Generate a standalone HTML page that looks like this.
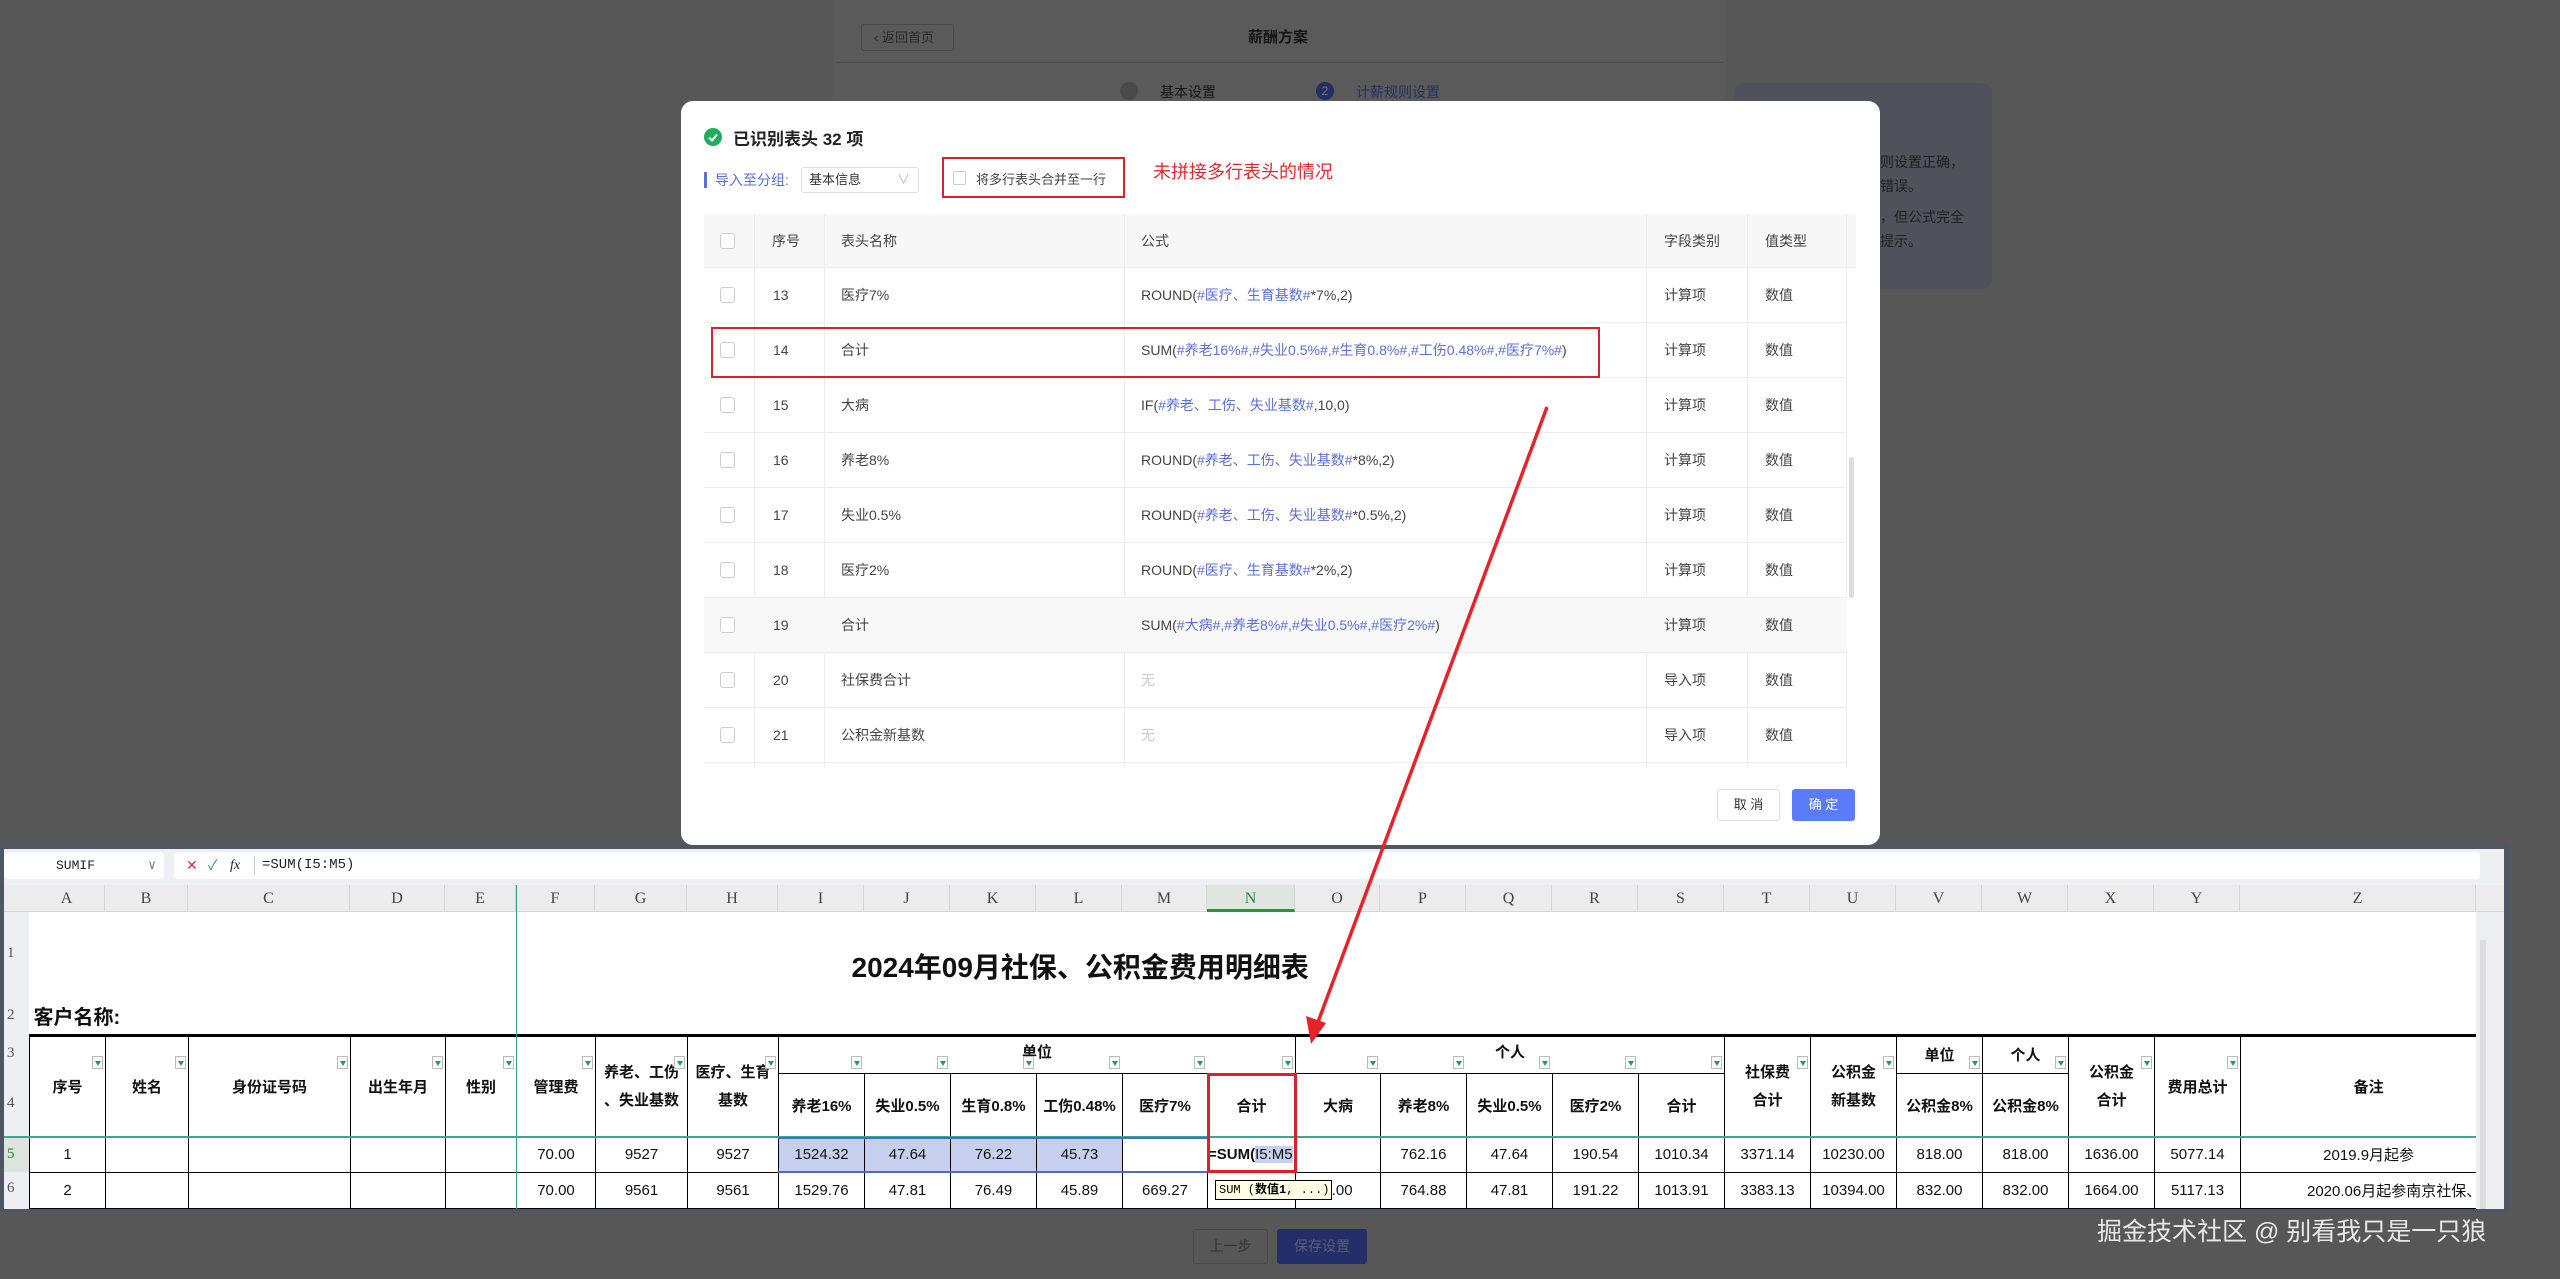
<!DOCTYPE html>
<html style="background:#575757"><head><meta charset="utf-8">
<style>
*{box-sizing:border-box;margin:0;padding:0}
html,body{background:#575757}
body{width:2560px;height:1279px;position:relative;overflow:hidden;font-family:"Liberation Sans","Noto Sans CJK SC",sans-serif;color:#333}
.a{position:absolute}
.mrow{position:absolute;left:704px;width:1143px;height:55px;border-bottom:1px solid #ececec;font-size:14px;color:#444}
.mrow div{position:absolute;top:0;height:100%;line-height:54px;white-space:nowrap}
.mrow .cb{left:16px;top:19px;width:15px;height:16px;border:1px solid #ccc;border-radius:3px;background:#fff}
.vl{position:absolute;top:0;bottom:0;width:1px;background:#ededed}
.b{color:#5b6fd8}
table.s{position:absolute;left:29px;top:912px;border-collapse:collapse;table-layout:fixed;background:#fff}
table.s td{border:1px solid #000;font-size:15px;text-align:center;vertical-align:middle;padding:0;color:#111;overflow:hidden;white-space:nowrap;position:relative}
table.s td.h{font-weight:bold}
table.s td.n{border:none}
.f{position:absolute;width:11px;height:13px;background:#fff;border:1px solid #bbb;font-size:0}
.f:after{content:"";position:absolute;left:2px;top:4px;border-left:3px solid transparent;border-right:3px solid transparent;border-top:5px solid #1a9c6a}
.ch{position:absolute;top:885px;height:27px;line-height:27px;text-align:center;font-family:"Liberation Serif",serif;font-size:16px;color:#444;border-right:1px solid #d6d6d6}
.rh{position:absolute;left:4px;width:25px;font-family:"Liberation Serif",serif;font-size:15px;color:#555;padding-left:3px}
</style></head><body>
<div class="a" style="left:0;top:0;width:2560px;height:1279px;background:#575757"></div>

<!-- background page -->
<div class="a" style="left:833px;top:0;width:893px;height:180px;background:#5a5a5a"></div>
<div class="a" style="left:861px;top:24px;width:93px;height:27px;border:1px solid #4a4a4a;border-radius:3px;font-size:13px;color:#2a2a2a;line-height:25px;padding-left:12px">‹ 返回首页</div>
<div class="a" style="left:1248px;top:26px;font-size:15px;font-weight:bold;color:#151515">薪酬方案</div>
<div class="a" style="left:836px;top:62px;width:887px;height:1px;background:#4e4e4e"></div>
<div class="a" style="left:1120px;top:82px;width:18px;height:18px;border-radius:50%;background:#4a4a4a"></div>
<div class="a" style="left:1160px;top:82px;font-size:14px;color:#151515">基本设置</div>
<div class="a" style="left:1316px;top:82px;width:18px;height:18px;border-radius:50%;background:#242e64;color:#777;font-size:12px;text-align:center;line-height:18px">2</div>
<div class="a" style="left:1356px;top:82px;font-size:14px;color:#263060">计薪规则设置</div>
<div class="a" style="left:1734px;top:83px;width:258px;height:206px;border-radius:10px;background:#4f525a"></div>
<div class="a" style="left:1880px;top:150px;font-size:14px;color:#1f1f1f;line-height:24px">则设置正确，<br>错误。</div>
<div class="a" style="left:1880px;top:205px;font-size:14px;color:#1f1f1f;line-height:24px">，但公式完全<br>提示。</div>

<!-- modal -->
<div class="a" style="left:681px;top:101px;width:1199px;height:744px;background:#fff;border-radius:12px"></div>
<div class="a" style="left:704px;top:128px;width:18px;height:18px;border-radius:50%;background:#1fae5b"></div>
<svg class="a" style="left:704px;top:128px" width="18" height="18"><path d="M5 9.5l3 3 5-6" stroke="#fff" stroke-width="2" fill="none"/></svg>
<div class="a" style="left:733px;top:125px;font-size:17px;font-weight:bold;color:#222">已识别表头 32 项</div>
<div class="a" style="left:704px;top:172px;width:3px;height:16px;background:#5b6fd8"></div>
<div class="a" style="left:715px;top:170px;font-size:14px;color:#5b6fd8">导入至分组:</div>
<div class="a" style="left:801px;top:167px;width:118px;height:26px;border:1px solid #ddd;border-radius:3px;font-size:13px;line-height:24px;padding-left:7px;color:#333">基本信息<span style="position:absolute;right:8px;color:#bbb">∨</span></div>
<div class="a" style="left:942px;top:157px;width:183px;height:41px;border:2px solid #d8222b"></div>
<div class="a" style="left:953px;top:171px;width:13px;height:14px;border:1px solid #ccc;border-radius:2px"></div>
<div class="a" style="left:976px;top:169px;font-size:13px;color:#444">将多行表头合并至一行</div>
<div class="a" style="left:1153px;top:158px;font-size:18px;color:#e02a2f">未拼接多行表头的情况</div>

<div class="a" style="left:704px;top:214px;width:1152px;height:54px;background:#f7f7f7;border-bottom:1px solid #ececec;font-size:14px;color:#444">
 <div class="a" style="left:16px;top:19px;width:15px;height:16px;border:1px solid #ccc;border-radius:3px;background:#fff"></div>
 <div class="a" style="left:68px;top:17px">序号</div>
 <div class="a" style="left:137px;top:17px">表头名称</div>
 <div class="a" style="left:437px;top:17px">公式</div>
 <div class="a" style="left:960px;top:17px">字段类别</div>
 <div class="a" style="left:1061px;top:17px">值类型</div>
</div>
<div class="a" style="left:704px;top:214px;width:1143px;height:554px;overflow:hidden">
 <div class="vl" style="left:50px"></div><div class="vl" style="left:120px"></div><div class="vl" style="left:420px"></div><div class="vl" style="left:942px"></div><div class="vl" style="left:1043px"></div><div class="vl" style="left:1142px"></div>
</div>
<div class="mrow" style="top:268px"><div class="cb"></div><div style="left:69px">13</div><div style="left:137px">医疗7%</div><div style="left:437px">ROUND(<span class="b">#医疗、生育基数#</span>*7%,2)</div><div style="left:960px">计算项</div><div style="left:1061px">数值</div></div>
<div class="mrow" style="top:323px"><div class="cb"></div><div style="left:69px">14</div><div style="left:137px">合计</div><div style="left:437px">SUM(<span class="b">#养老16%#,#失业0.5%#,#生育0.8%#,#工伤0.48%#,#医疗7%#</span>)</div><div style="left:960px">计算项</div><div style="left:1061px">数值</div></div>
<div class="mrow" style="top:378px"><div class="cb"></div><div style="left:69px">15</div><div style="left:137px">大病</div><div style="left:437px">IF(<span class="b">#养老、工伤、失业基数#</span>,10,0)</div><div style="left:960px">计算项</div><div style="left:1061px">数值</div></div>
<div class="mrow" style="top:433px"><div class="cb"></div><div style="left:69px">16</div><div style="left:137px">养老8%</div><div style="left:437px">ROUND(<span class="b">#养老、工伤、失业基数#</span>*8%,2)</div><div style="left:960px">计算项</div><div style="left:1061px">数值</div></div>
<div class="mrow" style="top:488px"><div class="cb"></div><div style="left:69px">17</div><div style="left:137px">失业0.5%</div><div style="left:437px">ROUND(<span class="b">#养老、工伤、失业基数#</span>*0.5%,2)</div><div style="left:960px">计算项</div><div style="left:1061px">数值</div></div>
<div class="mrow" style="top:543px"><div class="cb"></div><div style="left:69px">18</div><div style="left:137px">医疗2%</div><div style="left:437px">ROUND(<span class="b">#医疗、生育基数#</span>*2%,2)</div><div style="left:960px">计算项</div><div style="left:1061px">数值</div></div>
<div class="mrow" style="top:598px;background:#f8f8f8"><div class="cb"></div><div style="left:69px">19</div><div style="left:137px">合计</div><div style="left:437px">SUM(<span class="b">#大病#,#养老8%#,#失业0.5%#,#医疗2%#</span>)</div><div style="left:960px">计算项</div><div style="left:1061px">数值</div></div>
<div class="mrow" style="top:653px"><div class="cb"></div><div style="left:69px">20</div><div style="left:137px">社保费合计</div><div style="left:437px;color:#ccc">无</div><div style="left:960px">导入项</div><div style="left:1061px">数值</div></div>
<div class="mrow" style="top:708px"><div class="cb"></div><div style="left:69px">21</div><div style="left:137px">公积金新基数</div><div style="left:437px;color:#ccc">无</div><div style="left:960px">导入项</div><div style="left:1061px">数值</div></div>
<div class="a" style="left:1849px;top:457px;width:5px;height:141px;border-radius:3px;background:#ddd"></div>
<div class="a" style="left:711px;top:327px;width:889px;height:51px;border:2px solid #d8222b"></div>
<div class="a" style="left:1717px;top:789px;width:63px;height:32px;border:1px solid #ddd;border-radius:3px;font-size:13px;text-align:center;line-height:30px;color:#333">取 消</div>
<div class="a" style="left:1792px;top:789px;width:63px;height:32px;background:#5b7cfa;border-radius:3px;font-size:13px;text-align:center;line-height:32px;color:#fff">确 定</div>

<!-- spreadsheet -->
<div class="a" style="left:0;top:845px;width:2509px;height:367px;background:#4e5666"></div>
<div class="a" style="left:4px;top:849px;width:2500px;height:360px;background:#eeeff2"></div>
<div class="a" style="left:4px;top:852px;width:160px;height:27px;background:#fff;border-radius:4px;font-family:'Liberation Mono',monospace;font-size:13px;line-height:27px;padding-left:52px;color:#222">SUMIF<span style="position:absolute;right:8px;color:#777">∨</span></div>
<div class="a" style="left:174px;top:852px;width:2306px;height:27px;background:#fff;border-radius:4px;font-size:14px;line-height:27px;color:#222">
 <span class="a" style="left:12px;color:#d03040">✕</span><span class="a" style="left:34px;color:#1a9c6a">✓</span><span class="a" style="left:56px;font-family:'Liberation Serif',serif;font-style:italic">fx</span>
 <span class="a" style="left:80px;top:4px;width:1px;height:19px;background:#ccc"></span>
 <span class="a" style="left:88px;font-family:'Liberation Mono',monospace;font-size:14px">=SUM(I5:M5)</span></div>
<div class="a" style="left:4px;top:885px;width:2500px;height:27px;background:#ececec;border-bottom:1px solid #d6d6d6"></div>
<div class="ch" style="left:29px;width:76px">A</div><div class="ch" style="left:105px;width:83px">B</div><div class="ch" style="left:188px;width:162px">C</div><div class="ch" style="left:350px;width:95px">D</div><div class="ch" style="left:445px;width:71px">E</div><div class="ch" style="left:516px;width:79px">F</div><div class="ch" style="left:595px;width:92px">G</div><div class="ch" style="left:687px;width:91px">H</div><div class="ch" style="left:778px;width:86px">I</div><div class="ch" style="left:864px;width:86px">J</div><div class="ch" style="left:950px;width:86px">K</div><div class="ch" style="left:1036px;width:86px">L</div><div class="ch" style="left:1122px;width:85px">M</div><div class="ch" style="left:1207px;width:88px;background:#dfe5df;border-bottom:3px solid #1a9c3a;color:#1a8a3a">N</div><div class="ch" style="left:1295px;width:85px">O</div><div class="ch" style="left:1380px;width:86px">P</div><div class="ch" style="left:1466px;width:86px">Q</div><div class="ch" style="left:1552px;width:86px">R</div><div class="ch" style="left:1638px;width:86px">S</div><div class="ch" style="left:1724px;width:86px">T</div><div class="ch" style="left:1810px;width:86px">U</div><div class="ch" style="left:1896px;width:86px">V</div><div class="ch" style="left:1982px;width:86px">W</div><div class="ch" style="left:2068px;width:86px">X</div><div class="ch" style="left:2154px;width:86px">Y</div><div class="ch" style="left:2240px;width:236px">Z</div>
<div class="rh" style="top:945px">1</div><div class="rh" style="top:1007px">2</div><div class="rh" style="top:1045px">3</div><div class="rh" style="top:1095px">4</div><div class="rh" style="color:#1a8a3a;background:#dde3dd;height:35px;top:1137px;line-height:35px">5</div><div class="rh" style="top:1180px">6</div>

<table class="s">
<colgroup><col style="width:76px"><col style="width:83px"><col style="width:162px"><col style="width:95px"><col style="width:71px"><col style="width:79px"><col style="width:92px"><col style="width:91px"><col style="width:86px"><col style="width:86px"><col style="width:86px"><col style="width:86px"><col style="width:85px"><col style="width:88px"><col style="width:85px"><col style="width:86px"><col style="width:86px"><col style="width:86px"><col style="width:86px"><col style="width:86px"><col style="width:86px"><col style="width:86px"><col style="width:86px"><col style="width:86px"><col style="width:86px"><col style="width:236px"></colgroup>
<tr style="height:86px"><td class="n" colspan="26" style="font-size:28px;font-weight:bold;text-align:left;padding-left:822px;padding-top:22px">2024年09月社保、公积金费用明细表</td></tr>
<tr style="height:37px"><td class="n" colspan="26" style="text-align:left;font-size:20px;font-weight:bold;padding-left:4px;border-bottom:3px solid #000">客户名称:</td></tr>
<tr style="height:38px">
<td class="h" rowspan="2">序号</td><td class="h" rowspan="2">姓名</td><td class="h" rowspan="2">身份证号码</td><td class="h" rowspan="2">出生年月</td><td class="h" rowspan="2">性别</td><td class="h" rowspan="2">管理费</td><td class="h" rowspan="2" style="line-height:28px">养老、工伤<br>、失业基数</td><td class="h" rowspan="2" style="line-height:28px">医疗、生育<br>基数</td>
<td class="h" colspan="6" style="vertical-align:top;padding-top:4px">单位</td>
<td class="h" colspan="5" style="vertical-align:top;padding-top:4px">个人</td>
<td class="h" rowspan="2" style="line-height:28px">社保费<br>合计</td><td class="h" rowspan="2" style="line-height:28px">公积金<br>新基数</td><td class="h">单位</td><td class="h">个人</td><td class="h" rowspan="2" style="line-height:28px">公积金<br>合计</td><td class="h" rowspan="2">费用总计</td><td class="h" rowspan="2">备注</td></tr>
<tr style="height:64px"><td class="h">养老16%</td><td class="h">失业0.5%</td><td class="h">生育0.8%</td><td class="h">工伤0.48%</td><td class="h">医疗7%</td><td class="h">合计</td><td class="h">大病</td><td class="h">养老8%</td><td class="h">失业0.5%</td><td class="h">医疗2%</td><td class="h">合计</td><td class="h">公积金8%</td><td class="h">公积金8%</td></tr>
<tr style="height:35px"><td>1</td><td></td><td></td><td></td><td></td><td>70.00</td><td>9527</td><td>9527</td><td style="background:#c6d0ee">1524.32</td><td style="background:#c6d0ee">47.64</td><td style="background:#c6d0ee">76.22</td><td style="background:#c6d0ee">45.73</td><td></td><td style="text-align:left;font-weight:bold;font-size:15px">=SUM(<span style="font-weight:normal;background:#c6d0ee">I5:M5</span></td><td></td><td>762.16</td><td>47.64</td><td>190.54</td><td>1010.34</td><td>3371.14</td><td>10230.00</td><td>818.00</td><td>818.00</td><td>1636.00</td><td>5077.14</td><td>2019.9月起参</td></tr>
<tr style="height:36px"><td>2</td><td></td><td></td><td></td><td></td><td>70.00</td><td>9561</td><td>9561</td><td>1529.76</td><td>47.81</td><td>76.49</td><td>45.89</td><td>669.27</td><td></td><td>0.00</td><td>764.88</td><td>47.81</td><td>191.22</td><td>1013.91</td><td>3383.13</td><td>10394.00</td><td>832.00</td><td>832.00</td><td>1664.00</td><td>5117.13</td><td style="text-align:left;padding-left:66px">2020.06月起参南京社保、公</td></tr>
</table>
<i class="f" style="left:92px;top:1056px"></i><i class="f" style="left:175px;top:1056px"></i><i class="f" style="left:337px;top:1056px"></i><i class="f" style="left:432px;top:1056px"></i><i class="f" style="left:503px;top:1056px"></i><i class="f" style="left:582px;top:1056px"></i><i class="f" style="left:674px;top:1056px"></i><i class="f" style="left:765px;top:1056px"></i>
<i class="f" style="left:851px;top:1056px"></i><i class="f" style="left:937px;top:1056px"></i><i class="f" style="left:1023px;top:1056px"></i><i class="f" style="left:1109px;top:1056px"></i><i class="f" style="left:1194px;top:1056px"></i><i class="f" style="left:1282px;top:1056px"></i><i class="f" style="left:1367px;top:1056px"></i><i class="f" style="left:1453px;top:1056px"></i><i class="f" style="left:1539px;top:1056px"></i><i class="f" style="left:1625px;top:1056px"></i><i class="f" style="left:1711px;top:1056px"></i><i class="f" style="left:1797px;top:1056px"></i><i class="f" style="left:1883px;top:1056px"></i><i class="f" style="left:1969px;top:1056px"></i><i class="f" style="left:2055px;top:1056px"></i><i class="f" style="left:2141px;top:1056px"></i><i class="f" style="left:2227px;top:1056px"></i>
<div class="a" style="left:2476px;top:912px;width:28px;height:297px;background:#eeeff2"></div>
<div class="a" style="left:2480px;top:940px;width:6px;height:269px;background:#ddd"></div>
<div class="a" style="left:516px;top:885px;width:1px;height:324px;background:#2aa08a"></div>
<div class="a" style="left:4px;top:1136px;width:2472px;height:2px;background:#3aa88e"></div>
<div class="a" style="left:778px;top:1137px;width:429px;height:2px;background:#4a6ad0"></div>
<div class="a" style="left:778px;top:1171px;width:429px;height:2px;background:#4a6ad0"></div>
<div class="a" style="left:1207px;top:1073px;width:90px;height:100px;border:3px solid #d8222b"></div>
<div class="a" style="left:1215px;top:1180px;width:117px;height:20px;background:#ffffe6;border:1px solid #000;font-family:'Liberation Mono','Noto Sans CJK SC',monospace;font-size:12px;line-height:18px;padding-left:3px;color:#000">SUM (<b>数值1</b>, ...)</div>

<!-- bottom -->
<div class="a" style="left:1193px;top:1229px;width:75px;height:35px;border:1px solid #4a4a4a;border-radius:3px;font-size:14px;color:#353535;text-align:center;line-height:33px">上一步</div>
<div class="a" style="left:1277px;top:1229px;width:90px;height:35px;background:#242e68;border-radius:3px;font-size:14px;color:#575d7c;text-align:center;line-height:35px">保存设置</div>
<div class="a" style="left:2097px;top:1212px;font-size:25px;color:#e8e8e8">掘金技术社区 @ 别看我只是一只狼</div>

<svg class="a" style="left:0;top:0" width="2560" height="1279"><line x1="1547" y1="407" x2="1318" y2="1022" stroke="#e4242b" stroke-width="3.5"/><polygon points="1311,1044 1306,1016 1326,1023" fill="#e4242b"/></svg>
</body></html>
